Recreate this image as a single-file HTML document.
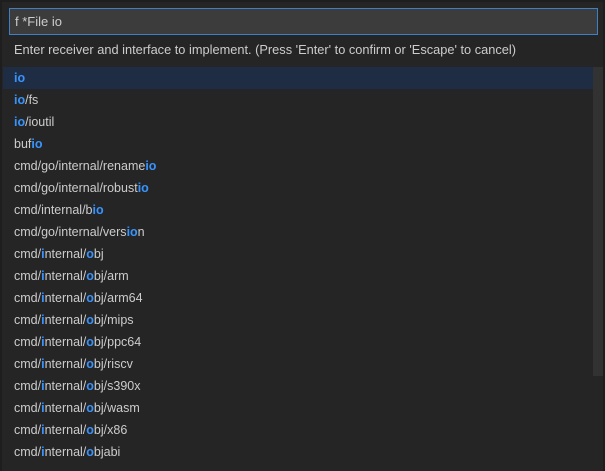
<!DOCTYPE html>
<html><head><meta charset="utf-8"><style>
*{margin:0;padding:0;box-sizing:border-box}
body{width:605px;height:471px;background:#1e1e1e;overflow:hidden;font-family:"Liberation Sans",sans-serif;color:#cccccc}
.panel{position:absolute;left:2px;top:2px;width:601px;height:469px;background:#252526}
.input{position:absolute;left:7px;top:6px;width:589px;height:27px;background:#3c3c3c;border:1px solid #3f7fc8;font-size:13px;line-height:25px;padding-left:5px;color:#cccccc}
.desc{position:absolute;left:12px;top:38px;font-size:12.8px;line-height:20px;white-space:nowrap}
.list{position:absolute;left:0;top:65px;width:601px}
.row{height:22px;line-height:22px;font-size:12.5px;padding-left:12px;white-space:nowrap}
.row.sel{background:#1f2d44;margin-left:1px;width:590px;padding-left:11px}
b{color:#3794ff;font-weight:bold}
.sb{position:absolute;left:591px;top:65px;width:10px;height:309px;background:#323232}
</style></head><body>
<div class="panel">
<div class="input">f *File io</div>
<div class="desc">Enter receiver and interface to implement. (Press 'Enter' to confirm or 'Escape' to cancel)</div>
<div class="list">
<div class="row sel"><b>io</b></div>
<div class="row"><b>io</b>/fs</div>
<div class="row"><b>io</b>/ioutil</div>
<div class="row">buf<b>io</b></div>
<div class="row">cmd/go/internal/rename<b>io</b></div>
<div class="row">cmd/go/internal/robust<b>io</b></div>
<div class="row">cmd/internal/b<b>io</b></div>
<div class="row">cmd/go/internal/vers<b>io</b>n</div>
<div class="row">cmd/<b>i</b>nternal/<b>o</b>bj</div>
<div class="row">cmd/<b>i</b>nternal/<b>o</b>bj/arm</div>
<div class="row">cmd/<b>i</b>nternal/<b>o</b>bj/arm64</div>
<div class="row">cmd/<b>i</b>nternal/<b>o</b>bj/mips</div>
<div class="row">cmd/<b>i</b>nternal/<b>o</b>bj/ppc64</div>
<div class="row">cmd/<b>i</b>nternal/<b>o</b>bj/riscv</div>
<div class="row">cmd/<b>i</b>nternal/<b>o</b>bj/s390x</div>
<div class="row">cmd/<b>i</b>nternal/<b>o</b>bj/wasm</div>
<div class="row">cmd/<b>i</b>nternal/<b>o</b>bj/x86</div>
<div class="row">cmd/<b>i</b>nternal/<b>o</b>bjabi</div>
</div>
<div class="sb"></div>
</div>
</body></html>
